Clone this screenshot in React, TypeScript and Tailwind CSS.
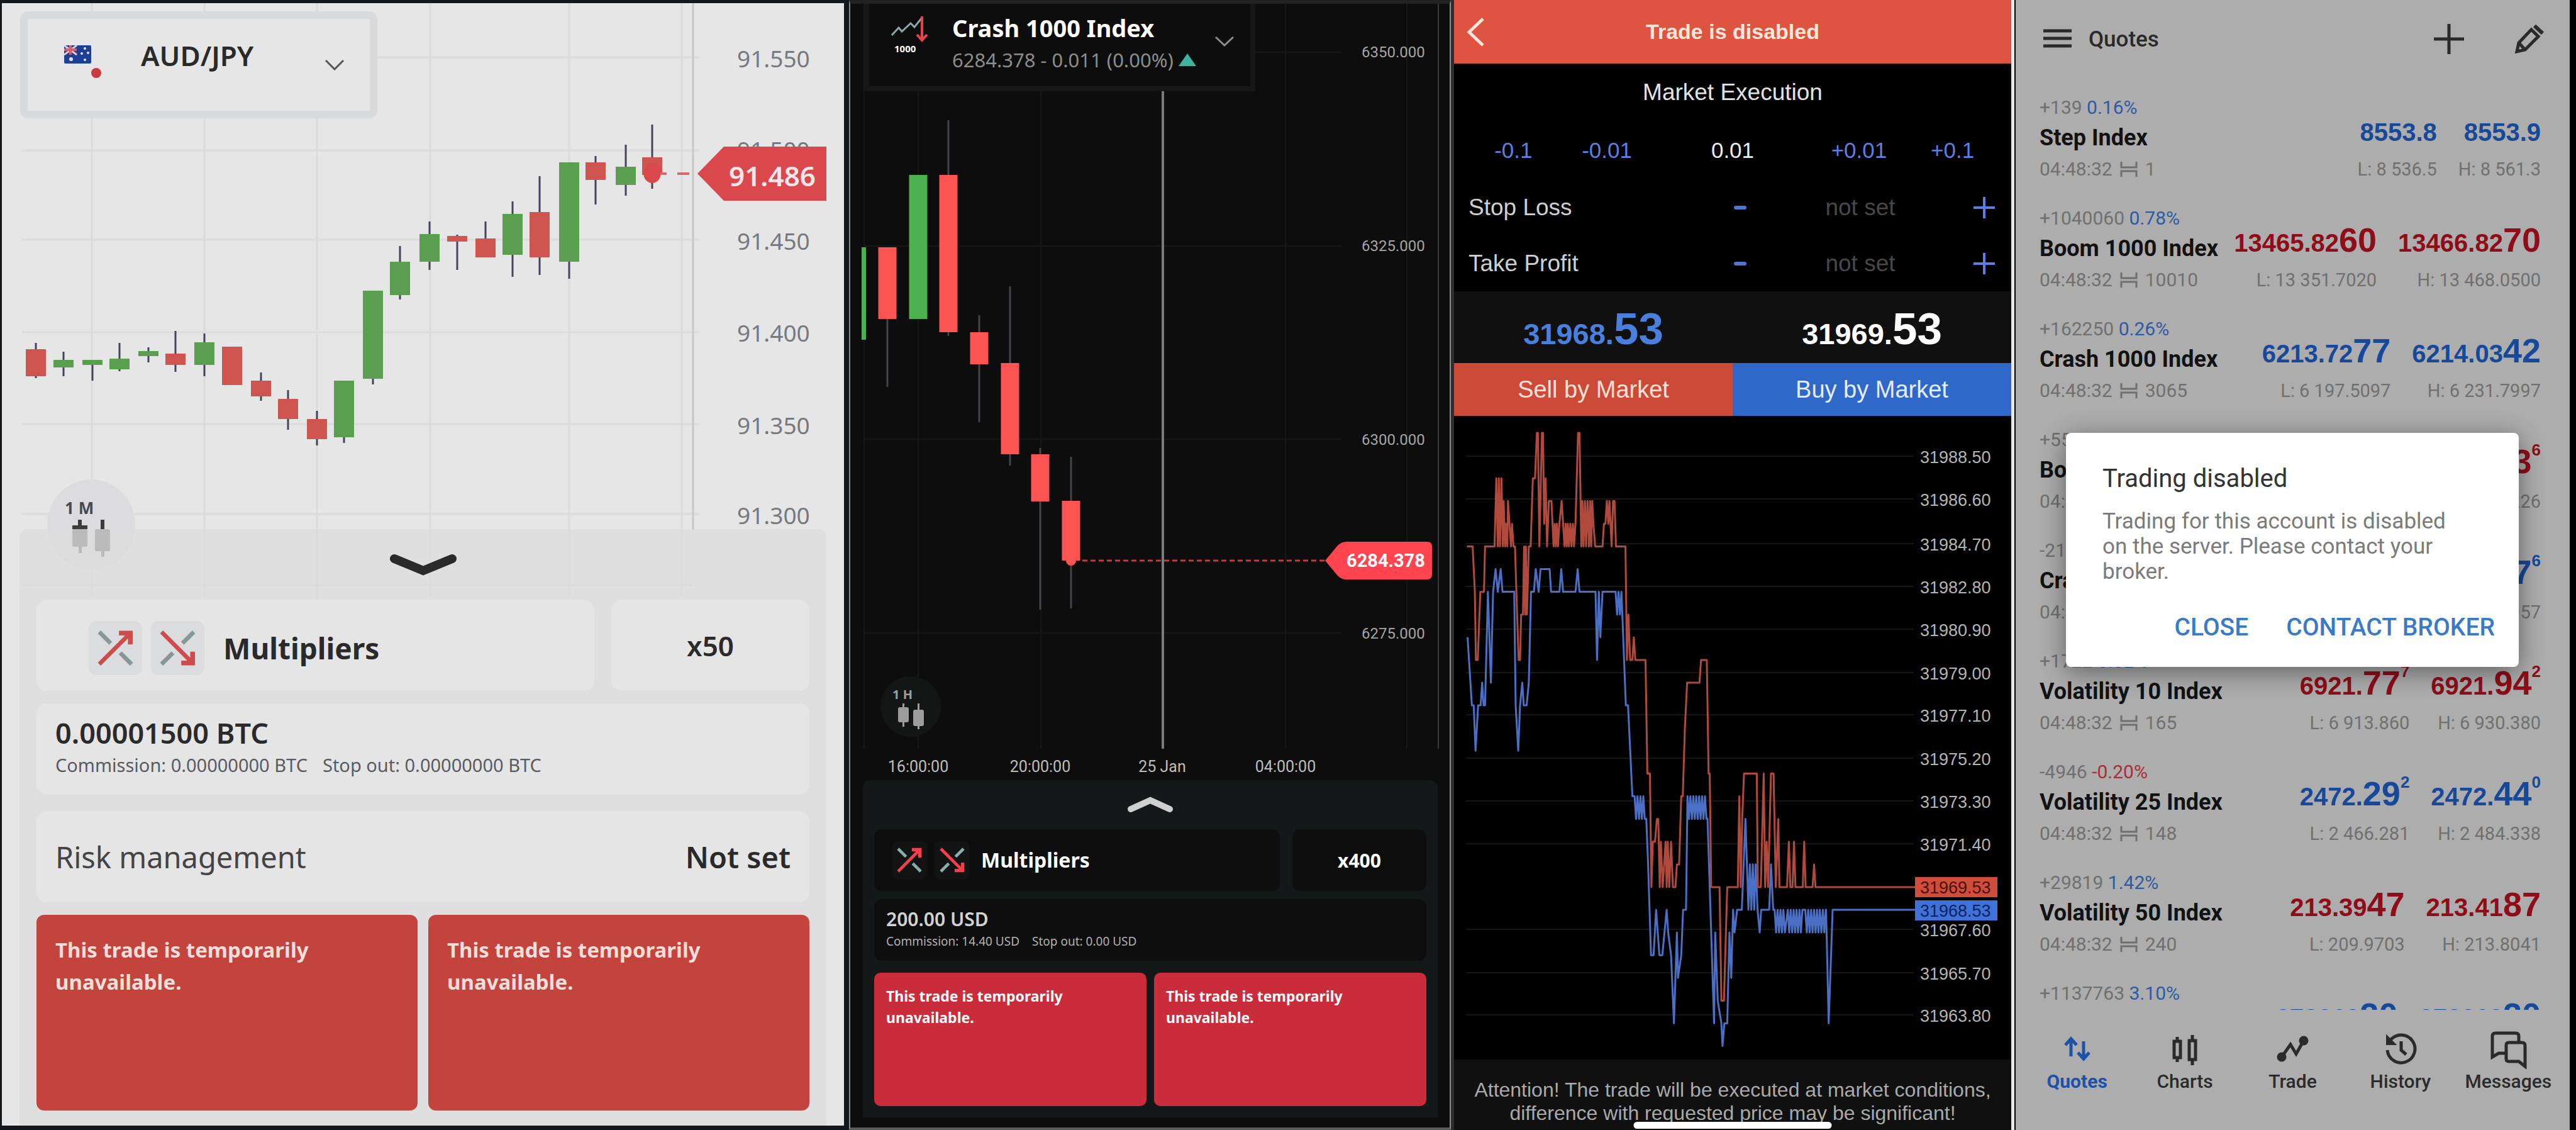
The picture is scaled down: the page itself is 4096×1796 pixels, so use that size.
import React from 'react';

type Candle = {
  x: number;
  body: [number, number];
  wick: [number, number];
  up?: boolean;
};

const audCandles: Candle[] = [
  { x: 57, body: [555, 598], wick: [545, 601] },
  { x: 101, body: [572, 584], wick: [559, 598], up: true },
  { x: 147, body: [572, 580], wick: [572, 605], up: true },
  { x: 190, body: [570, 587], wick: [545, 590], up: true },
  { x: 236, body: [558, 566], wick: [552, 576], up: true },
  { x: 279, body: [562, 580], wick: [526, 591] },
  { x: 325, body: [544, 580], wick: [530, 598], up: true },
  { x: 369, body: [551, 612], wick: [551, 612] },
  { x: 415, body: [605, 630], wick: [592, 637] },
  { x: 458, body: [634, 666], wick: [620, 683] },
  { x: 504, body: [666, 698], wick: [653, 708] },
  { x: 547, body: [605, 695], wick: [605, 704], up: true },
  { x: 593, body: [462, 602], wick: [462, 611], up: true },
  { x: 636, body: [416, 469], wick: [391, 476], up: true },
  { x: 683, body: [372, 416], wick: [352, 429], up: true },
  { x: 727, body: [375, 384], wick: [373, 429] },
  { x: 772, body: [379, 409], wick: [352, 409] },
  { x: 815, body: [340, 405], wick: [320, 440], up: true },
  { x: 858, body: [337, 409], wick: [280, 437] },
  { x: 905, body: [258, 416], wick: [258, 443], up: true },
  { x: 947, body: [258, 286], wick: [248, 325] },
  { x: 995, body: [265, 294], wick: [230, 311], up: true },
  { x: 1037, body: [250, 278], wick: [198, 300] }
];

const crashCandles: Candle[] = [
  { x: 68, body: [393, 507], wick: [393, 615] },
  { x: 117, body: [278, 507], wick: [278, 507], up: true },
  { x: 165, body: [278, 528], wick: [191, 534] },
  { x: 214, body: [528, 579], wick: [501, 671] },
  { x: 263, body: [577, 722], wick: [455, 740] },
  { x: 311, body: [722, 797], wick: [712, 969] },
  { x: 360, body: [796, 891], wick: [726, 967] }
];

// [시간, 31969.53 기준 가격 차이]
const askTicks = [
  [52, 15], [68, 15], [74, 13], [77, 10], [82, 10], [89, 13], [99, 13], [102, 15], [128, 15], [133, 18],
  [137, 15], [140, 18], [143, 15], [147, 18], [151, 15], [153, 17], [157, 15], [160, 16], [163, 15], [165, 17],
  [169, 16], [173, 15], [176, 16], [180, 15], [184, 15], [190, 12], [194, 10], [198, 10], [201, 12], [206, 12],
  [209, 15], [212, 12], [214, 15], [217, 12], [222, 15], [227, 15], [233, 18], [239, 18], [244, 20], [247, 20],
  [251, 15], [258, 20], [261, 20], [264, 16], [268, 18], [272, 15], [277, 17], [284, 17], [290, 15], [293, 16],
  [296, 15], [299, 16], [302, 15], [306, 16], [312, 17], [316, 16], [320, 15], [323, 16], [326, 15], [329, 16],
  [332, 15], [336, 16], [339, 15], [343, 16], [346, 15], [350, 16], [357, 20], [361, 20], [366, 15], [369, 17],
  [372, 15], [376, 17], [379, 15], [383, 17], [387, 15], [390, 17], [393, 15], [396, 17], [399, 16], [404, 15],
  [424, 15], [428, 16], [432, 16], [436, 17], [440, 16], [443, 17], [449, 15], [453, 17], [457, 17], [461, 15],
  [487, 15], [491, 10], [495, 12], [500, 10], [506, 10], [510, 11], [514, 10], [542, 10], [547, 5], [554, 5],
  [558, 0], [562, 2], [568, 2], [573, 3], [577, 3], [581, 0], [584, 2], [589, 0], [597, 2], [600, 0],
  [603, 2], [607, 0], [612, 2], [617, 0], [624, 0], [628, 1], [634, 1], [640, 4], [644, 4], [650, 7],
  [656, 9], [690, 9], [694, 10], [710, 10], [715, 5], [718, 5], [722, 0], [745, 0], [750, -5], [757, -5],
  [766, 0], [795, 0], [799, 4], [803, 0], [807, 3], [812, 5], [847, 5], [850, 0], [858, 0], [866, 5],
  [870, 0], [874, 2], [878, 0], [886, 5], [893, 5], [899, 0], [906, 3], [909, 0], [930, 0], [935, 2],
  [939, 0], [945, 0], [949, 2], [953, 0], [973, 0], [977, 2], [981, 0], [1000, 0], [1004, 1], [1008, 0],
  [1281, 0]
];

// 구간 [from, to]에서 두 값 사이를 오가는 틱
const flicker = (from: number, to: number, hi: number, lo: number) => {
  const ticks: number[][] = [];
  for (let t = from, i = 0; t <= to; t += 4, i++) ticks.push([t, i % 2 ? lo : hi]);
  return ticks;
};

const bidTicks = [
  [54, 12], [66, 9], [71, 9], [76, 7], [83, 9], [90, 9], [94, 10], [98, 9], [102, 9], [110, 14],
  [114, 12], [118, 10], [124, 14], [131, 15], [137, 14], [145, 15], [150, 14], [182, 14], [186, 9], [193, 7],
  [198, 9], [204, 10], [208, 9], [216, 9], [222, 10], [228, 14], [236, 14], [241, 15], [249, 14], [254, 15],
  [279, 15], [283, 14], [306, 14], [311, 15], [316, 14], [350, 14], [356, 15], [361, 14], [405, 14], [409, 11],
  [414, 14], [418, 12], [424, 14], [458, 14], ...flicker(460, 476, 14, 13), [488, 9], [494, 9], [506, 5],
  ...flicker(512, 542, 5, 4), [544, 4], [549, 2], [557, -2], [564, -2], [571, 0], [580, -2], [588, -2],
  [600, 0], [604, -1], [612, -2], [620, -5], [628, -1], [631, -3], [640, -2], [645, 0], [653, 0],
  ...flicker(657, 712, 5, 4), [712, 4], [722, -1], [730, -5], [733, -1], [740, -4], [750, -5], [753, -6],
  [758, -5], [766, -5], [772, -1], [777, -3], [782, 0], [786, -1], [793, 0], [806, 0], [816, 4],
  [824, 0], [828, 2], [832, 0], [836, 2], [840, 0], [844, 2], [849, 0], [855, -1], [859, 0], [881, 0],
  [886, 2], [892, 0], ...flicker(896, 926, 0, -1), ...flicker(932, 972, 0, -1), ...flicker(980, 1037, 0, -1),
  [1037, 0], [1044, -5], [1055, 0], [1281, 0]
];

const toPoints = (ticks: number[][], zeroY: number) =>
  ticks
    .map(([t, v]) => `${Math.round((t - 17) * 5.8) / 10},${Math.round((zeroY - v * 36.1) * 10) / 10}`)
    .join(' ');

const tickLabels: [string, number][] = [
  ['31988.50', 727], ['31986.60', 795], ['31984.70', 866], ['31982.80', 934], ['31980.90', 1002],
  ['31979.00', 1071], ['31977.10', 1138], ['31975.20', 1207], ['31973.30', 1275], ['31971.40', 1343],
  ['31967.60', 1479], ['31965.70', 1548], ['31963.80', 1615]
];

type Price = { main: string; big?: string; sup?: string };

type Quote = {
  change: string;
  percent: string;
  name: string;
  spread: string;
  bid: Price;
  ask: Price;
  low: string;
  high: string;
  down?: boolean;
  negative?: boolean;
};

const quotes: Quote[] = [
  { change: '+139', percent: '0.16%', name: 'Step Index', spread: '1', bid: { main: '8553.8' }, ask: { main: '8553.9' }, low: '8 536.5', high: '8 561.3' },
  { change: '+1040060', percent: '0.78%', name: 'Boom 1000 Index', spread: '10010', bid: { main: '13465.82', big: '60' }, ask: { main: '13466.82', big: '70' }, low: '13 351.7020', high: '13 468.0500', down: true },
  { change: '+162250', percent: '0.26%', name: 'Crash 1000 Index', spread: '3065', bid: { main: '6213.72', big: '77' }, ask: { main: '6214.03', big: '42' }, low: '6 197.5097', high: '6 231.7997' },
  { change: '+5520', percent: '0.12%', name: 'Boom 500 Index', spread: '510', bid: { main: '4921.', big: '32', sup: '6' }, ask: { main: '4921.', big: '83', sup: '6' }, low: '4 903.114', high: '4 930.226', down: true },
  { change: '-2140', percent: '-0.04%', name: 'Crash 500 Index', spread: '480', bid: { main: '5117.', big: '19', sup: '6' }, ask: { main: '5117.', big: '67', sup: '6' }, low: '5 098.310', high: '5 130.957', negative: true },
  { change: '+1722', percent: '0.02%', name: 'Volatility 10 Index', spread: '165', bid: { main: '6921.', big: '77', sup: '7' }, ask: { main: '6921.', big: '94', sup: '2' }, low: '6 913.860', high: '6 930.380', down: true },
  { change: '-4946', percent: '-0.20%', name: 'Volatility 25 Index', spread: '148', bid: { main: '2472.', big: '29', sup: '2' }, ask: { main: '2472.', big: '44', sup: '0' }, low: '2 466.281', high: '2 484.338', negative: true },
  { change: '+29819', percent: '1.42%', name: 'Volatility 50 Index', spread: '240', bid: { main: '213.39', big: '47' }, ask: { main: '213.41', big: '87' }, low: '209.9703', high: '213.8041', down: true },
  { change: '+1137763', percent: '3.10%', name: 'Volatility 75 Index', spread: '3100', bid: { main: '378263', big: '20' }, ask: { main: '378263', big: '20' }, low: '366 840.10', high: '379 120.44' }
];

function Candles({ data, width, up, down, wick }: { data: Candle[]; width: number; up: string; down: string; wick: string }) {
  return (
    <>
      {data.map((c) => (
        <g key={c.x}>
          <line x1={c.x} x2={c.x} y1={c.wick[0]} y2={c.wick[1]} stroke={wick} strokeWidth="3" />
          <rect x={c.x - width / 2} y={c.body[0]} width={width} height={c.body[1] - c.body[0]} fill={c.up ? up : down} />
        </g>
      ))}
    </>
  );
}

function MultiplierIcon({ down = false, muted, accent }: { down?: boolean; muted: string; accent: string }) {
  return (
    <svg viewBox="0 0 60 60" className="h-full w-full" fill="none" strokeWidth="7">
      <g transform={down ? 'translate(0 60) scale(1 -1)' : undefined}>
        <path d="M3 3 L22 22 M38 38 L57 57" stroke={muted} />
        <path d="M3 57 L54 6" stroke={accent} />
        <path d="M36 5 H55 V24" stroke={accent} strokeWidth="8" />
      </g>
    </svg>
  );
}

function AudJpyPanel() {
  return (
    <section className="relative flex min-w-0 flex-col border-t-[5px] border-r-8 border-b-[7px] border-l-[3px] border-[#15181a] bg-[#e6e6e6] font-['Noto_Sans',sans-serif] text-[#2a2a2b]">
      <svg viewBox="3 5 1339 945" className="block h-auto w-full">
        <g stroke="#dbdbdc" strokeWidth="3">
          {[146, 325, 504, 684, 905, 1084].map((x) => (
            <line key={x} x1={x} x2={x} y1="5" y2="950" />
          ))}
          {[91, 239, 381, 528, 674, 817].map((y) => (
            <line key={y} x1="34" x2="1112" y1={y} y2={y} />
          ))}
          <line x1="34" x2="1102" y1="930" y2="930" />
          <line x1="1102" x2="1102" y1="5" y2="842" stroke="#c6c7ca" />
        </g>
        <g fontSize="37" fill="#77797f">
          <text x="1172" y="107">91.550</text>
          <text x="1172" y="252">91.500</text>
          <text x="1172" y="397">91.450</text>
          <text x="1172" y="543">91.400</text>
          <text x="1172" y="690">91.350</text>
          <text x="1172" y="833">91.300</text>
        </g>
        <Candles data={audCandles} width={32} up="#5a9e50" down="#cf5550" wick="#45455a" />
        <ellipse cx="1037" cy="275" rx="14" ry="16" fill="#d8484c" />
        <path d="M1050 276 H1060 M1077 276 H1096" stroke="#d8686a" strokeWidth="4" />
        <path d="M1109 276 L1151 233 H1314 V319 H1151 Z" fill="#d8484c" />
        <text x="1159" y="296" fontSize="44" fontWeight="600" fill="#f3e6e6">91.486</text>
        <ellipse cx="145" cy="834" rx="70" ry="72" fill="#dcdcde" />
        <text x="103" y="817" fontSize="26" fontWeight="700" fill="#4a4a4a">1 M</text>
        <path d="M127 826 V836 M163 826 V842 M115 838 H139" stroke="#3c3c3c" strokeWidth="6" />
        <g fill="#6b6b6b">
          <rect x="115" y="841" width="24" height="28" rx="3" />
          <rect x="125" y="869" width="5" height="10" />
          <rect x="151" y="841" width="24" height="35" rx="3" />
          <rect x="161" y="876" width="5" height="9" />
        </g>
      </svg>

      <button className="absolute top-[13px] left-[29px] flex h-[170px] w-[568px] items-start rounded-xl border-[12px] border-[#d9dadc] bg-[#e6e6e6] pt-[30px] pr-10 pl-[58px] text-left">
        <svg viewBox="0 0 60 54" className="mt-3 h-[54px] w-[60px]">
          <rect width="43" height="29" fill="#1d3f94" rx="2" />
          <path d="M0 0 L20 15 M20 0 L0 15" stroke="#e8c9cf" strokeWidth="3" />
          <path d="M10 0 V15 M0 7 H20" stroke="#d5606c" strokeWidth="4" />
          <g fill="#e6e6f0">
            <circle cx="11" cy="22" r="3" />
            <circle cx="33" cy="5" r="2" />
            <circle cx="28" cy="13" r="2" />
            <circle cx="38" cy="12" r="2" />
            <circle cx="33" cy="23" r="2" />
          </g>
          <circle cx="51" cy="44" r="8" fill="#c93a42" />
        </svg>
        <span className="ml-[62px] text-[44px] leading-[56px] font-semibold">AUD/JPY</span>
        <svg viewBox="0 0 32 18" className="mt-[34px] ml-auto h-[18px] w-8" fill="none" stroke="#55565a" strokeWidth="3">
          <path d="M2 2 L16 16 L30 2" />
        </svg>
      </button>

      <div className="relative mx-7 -mt-[109px] flex flex-1 flex-col rounded-t-xl bg-[#dbdbdd]/70 px-[27px] pt-[38px] pb-6">
        <button aria-label="Collapse" className="mx-auto mb-[37px] block">
          <svg viewBox="0 0 108 38" className="h-[38px] w-[108px]" fill="none" stroke="#2a2a2b" strokeWidth="14" strokeLinecap="round">
            <path d="M8 9 L54 28 L100 9" />
          </svg>
        </button>
        <div className="flex h-36 gap-[27px]">
          <button className="flex flex-1 items-center gap-[14px] rounded-2xl bg-[#e5e5e5] pt-2 pl-[83px]">
            <span className="h-[86px] w-[85px] rounded-xl bg-[#dadcdd] p-[14px]"><MultiplierIcon muted="#84989a" accent="#ce4c4b" /></span>
            <span className="h-[86px] w-[85px] rounded-xl bg-[#dadcdd] p-[14px]"><MultiplierIcon down muted="#84989a" accent="#ce4c4b" /></span>
            <span className="ml-4 text-[46px] leading-[60px] font-bold">Multipliers</span>
          </button>
          <button className="w-[315px] rounded-2xl bg-[#e5e5e5] text-[44px] font-semibold">x50</button>
        </div>
        <div className="mt-5 h-36 rounded-2xl bg-[#e5e5e5] px-[30px] pt-[18px]">
          <p className="text-[45px] leading-[58px] font-semibold">0.00001500 BTC</p>
          <p className="mt-1 flex gap-6 text-[29px] leading-9 text-[#5a5b5e]">
            <span>Commission: 0.00000000 BTC</span>
            <span>Stop out: 0.00000000 BTC</span>
          </p>
        </div>
        <button className="mt-7 flex h-36 items-center justify-between rounded-2xl bg-[#e5e5e5] px-[30px] text-[47px]">
          <span className="text-[#444446]">Risk management</span>
          <span className="font-semibold">Not set</span>
        </button>
        <div className="mt-5 flex flex-1 gap-[17px] text-[33px] leading-[51px] font-bold text-[#f1dedb]">
          <button className="flex flex-1 items-start rounded-xl bg-[#c3443d] px-[30px] pt-[30px] text-left"><span className="max-w-[460px]">This trade is temporarily unavailable.</span></button>
          <button className="flex flex-1 items-start rounded-xl bg-[#c3443d] px-[30px] pt-[30px] text-left"><span className="max-w-[460px]">This trade is temporarily unavailable.</span></button>
        </div>
      </div>
    </section>
  );
}

function CrashPanel() {
  return (
    <section className="relative flex min-w-0 flex-col border-x-2 border-t-[6px] border-b-4 border-x-[#8b8b8b] border-t-[#222222] border-b-[#5a5a5a] bg-[#0d0d0d] font-['Noto_Sans',sans-serif]">
      <svg viewBox="9 6 953 1234" className="block h-auto w-full">
        <g stroke="#171818" strokeWidth="2">
          {[31, 117, 312, 701, 894].map((x) => (
            <line key={x} x1={x} x2={x} y1="6" y2="1190" />
          ))}
          {[83, 391, 698, 1006].map((y) => (
            <line key={y} x1="31" x2="790" y1={y} y2={y} />
          ))}
          <line x1="944" x2="944" y1="6" y2="1190" stroke="#3a3a3a" />
        </g>
        <line x1="506" x2="506" y1="140" y2="1190" stroke="#7a7a7a" strokeWidth="4" />
        <g fontSize="24" fill="#a4a4a4" className="font-[Roboto,sans-serif]">
          <text x="822" y="91">6350.000</text>
          <text x="822" y="399">6325.000</text>
          <text x="822" y="707">6300.000</text>
          <text x="822" y="1015">6275.000</text>
        </g>
        <g fontSize="25" fill="#bcbcbc" textAnchor="middle" className="font-[Roboto,sans-serif]">
          <text x="117" y="1227">16:00:00</text>
          <text x="311" y="1227">20:00:00</text>
          <text x="505" y="1227">25 Jan</text>
          <text x="701" y="1227">04:00:00</text>
        </g>
        <rect x="27" y="393" width="7" height="147" fill="#4caf50" />
        <Candles data={crashCandles} width={29} up="#4caf50" down="#fb5452" wick="#43434a" />
        <circle cx="360" cy="891" r="8" fill="#fb5452" />
        <line x1="378" x2="764" y1="891" y2="891" stroke="#c23a42" strokeWidth="3" strokeDasharray="8 5" />
        <path d="M764 891 L784 867 Q790 861 798 861 H926 Q934 861 934 869 V913 Q934 921 926 921 H798 Q790 921 784 915 Z" fill="#ff444f" />
        <text x="798" y="901" fontSize="29" fontWeight="700" fill="#ffffff" className="font-[Roboto,sans-serif]">6284.378</text>
        <circle cx="105" cy="1123" r="48" fill="#141616" />
        <text x="76" y="1111" fontSize="20" fontWeight="700" fill="#9d9d9d">1 H</text>
        <g fill="#9d9d9d">
          <rect x="85" y="1124" width="17" height="24" rx="3" />
          <rect x="92" y="1118" width="3" height="37" />
          <rect x="109" y="1128" width="17" height="26" rx="3" />
          <rect x="116" y="1118" width="3" height="41" />
        </g>
      </svg>

      <button className="absolute top-0 left-[22px] flex h-[139px] w-[622px] items-start border-8 border-t-0 border-[#161717] bg-[#0d0d0d] pt-[15px] pr-[26px] pl-[34px] text-left">
        <svg viewBox="0 0 60 66" className="mt-1 h-[66px] w-[60px]" fill="none" strokeWidth="3">
          <path d="M2 31 L13 19 L18 25 L32 12 L38 18 L50 3" stroke="#87a9a8" />
          <path d="M50 1 V38 M42 30 L50 39 L58 30" stroke="#e5424d" strokeWidth="4" />
          <text x="6" y="58" fontSize="15" fontWeight="700" fill="#ffffff" stroke="none">1000</text>
        </svg>
        <span className="ml-[38px] flex-1">
          <span className="block text-[38px] leading-[46px] font-bold text-white">Crash 1000 Index</span>
          <span className="flex items-center gap-2 text-[31px] leading-[56px] text-[#8c8c8c]">
            6284.378 - 0.011 (0.00%)
            <svg viewBox="0 0 28 20" className="h-5 w-7"><path d="M14 0 L28 20 H0 Z" fill="#3fb39b" /></svg>
          </span>
        </span>
        <svg viewBox="0 0 30 16" className="mt-[37px] h-4 w-[30px]" fill="none" stroke="#8b8b8b" strokeWidth="3">
          <path d="M1 1 L15 14 L29 1" />
        </svg>
      </button>

      <div className="mr-[19px] mb-4 ml-5 flex flex-1 flex-col rounded-t-xl bg-[#151818] px-[18px] pt-6 pb-[18px] text-white">
        <button aria-label="Expand" className="mx-auto mb-[24px] block">
          <svg viewBox="0 0 74 30" className="h-[30px] w-[74px]" fill="none" stroke="#cfcfcf" strokeWidth="10" strokeLinecap="round">
            <path d="M6 22 L37 8 L68 22" />
          </svg>
        </button>
        <div className="flex h-[98px] gap-5">
          <button className="flex flex-1 items-center rounded-xl bg-[#0e0e0e] pl-[28px]">
            <span className="h-[60px] w-[56px] rounded-lg bg-[#121414] p-2"><MultiplierIcon muted="#86b0ab" accent="#f3414c" /></span>
            <span className="ml-3 h-[60px] w-[56px] rounded-lg bg-[#121414] p-2"><MultiplierIcon down muted="#86b0ab" accent="#f3414c" /></span>
            <span className="ml-[18px] text-[32px] leading-10 font-bold">Multipliers</span>
          </button>
          <button className="w-[213px] rounded-xl bg-[#0e0e0e] text-[30px] font-bold">x400</button>
        </div>
        <div className="mt-[13px] h-[98px] rounded-xl bg-[#0e0e0e] px-[19px] pt-[12px]">
          <p className="text-[30px] leading-[40px] font-semibold text-[#d2d2d2]">200.00 USD</p>
          <p className="flex gap-5 text-[19px] leading-[30px] text-[#b0b0b0]">
            <span>Commission: 14.40 USD</span>
            <span>Stop out: 0.00 USD</span>
          </p>
        </div>
        <div className="mt-[19px] flex flex-1 gap-3 text-[23px] leading-[34px] font-bold text-white">
          <button className="flex flex-1 items-start rounded-[10px] bg-[#c92d3c] px-[19px] pt-5 text-left"><span className="max-w-[320px]">This trade is temporarily unavailable.</span></button>
          <button className="flex flex-1 items-start rounded-[10px] bg-[#c92d3c] px-[19px] pt-5 text-left"><span className="max-w-[320px]">This trade is temporarily unavailable.</span></button>
        </div>
      </div>
    </section>
  );
}

function LevelRow({ id, label }: { id: string; label: string }) {
  return (
    <div className="flex h-[89px] items-center pr-[26px] pl-[23px]">
      <label htmlFor={id} className="flex-1 text-[37px] text-[#cfcfcf]">{label}</label>
      <button aria-label={`Decrease ${label}`} className="flex h-9 w-[34px] items-center">
        <span className="h-[6px] w-5 rounded-sm bg-[#4f74d2]" />
      </button>
      <input id={id} placeholder="not set" className="mr-[80px] ml-[67px] w-[200px] bg-transparent text-center text-[37px] text-white placeholder:text-[#484848]" />
      <button aria-label={`Increase ${label}`}>
        <svg viewBox="0 0 34 34" className="h-[34px] w-[34px]" stroke="#5a80e6" strokeWidth="4"><path d="M17 0 V34 M0 17 H34" /></svg>
      </button>
    </div>
  );
}

function ExecutionPanel() {
  return (
    <section className="relative flex min-w-0 flex-col border-r-[5px] border-l-[5px] border-l-[#2c2c2c] border-r-[#e8e8e8] bg-black font-['Liberation_Sans',Arial,sans-serif]">
      <header className="relative flex h-[101px] items-center justify-center bg-[#df5341]">
        <button aria-label="Back" className="absolute top-7 left-[18px]">
          <svg viewBox="0 0 32 46" className="h-[46px] w-8" fill="none" stroke="#fbe6dc" strokeWidth="5"><path d="M28 2 L6 23 L28 44" /></svg>
        </button>
        <h1 className="text-[34px] font-bold text-[#fde6da]">Trade is disabled</h1>
      </header>
      <p className="flex h-[92px] items-center justify-center text-[37px] text-[#e2e2e2]">Market Execution</p>
      <div className="grid h-[92px] grid-cols-[148fr_148fr_250fr_150fr_146fr] items-center px-5 text-[35px] text-[#5a80e0]">
        <button>-0.1</button>
        <button>-0.01</button>
        <input aria-label="Volume" defaultValue="0.01" className="min-w-0 bg-transparent text-center text-[#ececec]" />
        <button>+0.01</button>
        <button>+0.1</button>
      </div>
      <LevelRow id="stop-loss" label="Stop Loss" />
      <LevelRow id="take-profit" label="Take Profit" />
      <div className="grid h-[114px] grid-cols-2 bg-[#101010] pt-[6px] text-center text-[47px] leading-[108px] font-bold">
        <p className="text-[#4a80dc]">31968.<span className="text-[71px]">53</span></p>
        <p className="text-white">31969.<span className="text-[71px]">53</span></p>
      </div>
      <div className="grid h-[84px] grid-cols-2 text-[38px]">
        <button className="bg-[#cb4a38] text-[#fbe1d8]">Sell by Market</button>
        <button className="bg-[#2f68c9] text-[#e3edff]">Buy by Market</button>
      </div>
      <svg viewBox="0 661 886 1023" className="block h-auto w-full">
        <g stroke="#171717" strokeWidth="2">
          {tickLabels.map(([label, y]) => (
            <line key={label} x1="19" x2="731" y1={y - 2} y2={y - 2} />
          ))}
        </g>
        <g fontSize="27" fill="#b4b4b4">
          {tickLabels.map(([label, y]) => (
            <text key={label} x="741" y={y + 9}>{label}</text>
          ))}
        </g>
        <polyline points={toPoints(bidTicks, 1446)} fill="none" stroke="#4a6fc4" strokeWidth="3" strokeLinejoin="round" />
        <polyline points={toPoints(askTicks, 1410)} fill="none" stroke="#b04a3c" strokeWidth="3" strokeLinejoin="round" />
        <rect x="733" y="1394" width="131" height="32" fill="#cf4d3a" />
        <rect x="733" y="1431" width="131" height="32" fill="#3f72d8" />
        <text x="741" y="1420" fontSize="27" fill="#4a120b">31969.53</text>
        <text x="741" y="1457" fontSize="27" fill="#0c2260">31968.53</text>
      </svg>
      <footer className="relative flex-1 bg-[#101010] pt-[30px] text-center text-[32px] leading-[37px] text-[#a9a9a9]">
        <p>Attention! The trade will be executed at market conditions,<br />difference with requested price may be significant!</p>
        <span className="absolute bottom-[2px] left-1/2 h-[11px] w-[315px] -translate-x-1/2 rounded-full bg-white" />
      </footer>
    </section>
  );
}

function PriceColumn({ price, label }: { price: Price; label: string }) {
  return (
    <div className="flex flex-col items-end whitespace-nowrap">
      <p className="mt-[22px] mb-[10px] h-16 font-['Liberation_Sans',sans-serif] text-[54px] leading-[64px] font-bold">
        <span className="text-[40px] leading-none">{price.main}</span>
        {price.big}
        {price.sup && <span className="align-[28px] text-[26px] leading-none">{price.sup}</span>}
      </p>
      <p className="text-[29px] leading-[44px] text-[#707070]">{label}</p>
    </div>
  );
}

function QuoteRow({ quote }: { quote: Quote }) {
  return (
    <li className="flex h-44 justify-between py-[18px] pr-[46px] pl-[38px]">
      <div className="whitespace-nowrap">
        <p className="text-[30px] leading-10 text-[#707070]">
          {quote.change} <span className={quote.negative ? 'text-[#a82f3a]' : 'text-[#2f5aa6]'}>{quote.percent}</span>
        </p>
        <p className="text-[36px] leading-[56px] font-bold text-[#121212]">{quote.name}</p>
        <p className="flex items-center gap-3 text-[30px] leading-[44px] text-[#707070]">
          04:48:32
          <svg viewBox="0 0 28 24" className="h-6 w-7" fill="none" stroke="#707070" strokeWidth="3"><path d="M2 0 V9 H26 V0 M2 24 V15 H26 V24" /></svg>
          {quote.spread}
        </p>
      </div>
      <div className={quote.down ? 'flex gap-[34px] text-[#8e0d19]' : 'flex gap-[34px] text-[#17499a]'}>
        <PriceColumn price={quote.bid} label={`L: ${quote.low}`} />
        <PriceColumn price={quote.ask} label={`H: ${quote.high}`} />
      </div>
    </li>
  );
}

function NavItem({ label, active = false, children }: { label: string; active?: boolean; children: React.ReactNode }) {
  return (
    <a
      href={`#${label.toLowerCase()}`}
      className={active ? 'flex flex-1 flex-col items-center font-bold text-[#1d52ab]' : 'flex flex-1 flex-col items-center font-medium text-[#2b2b2b]'}>
      <svg viewBox="0 0 60 60" className="h-[60px] w-[60px]" fill="none" stroke="currentColor" strokeWidth="5">{children}</svg>
      <span className="text-[30px] leading-10">{label}</span>
    </a>
  );
}

function QuotesPanel() {
  return (
    <section className="relative flex h-screen min-w-0 flex-col border-r-[10px] border-l-2 border-black bg-[#adadad] font-[Roboto,sans-serif]">
      <header className="flex h-[133px] shrink-0 items-start pt-[34px] pr-10 pl-11 text-[#2a2a2a]">
        <button aria-label="Menu" className="mt-3">
          <svg viewBox="0 0 45 30" className="h-[30px] w-[45px]" stroke="currentColor" strokeWidth="5"><path d="M0 3 H45 M0 15 H45 M0 27 H45" /></svg>
        </button>
        <h2 className="ml-[27px] flex-1 text-[35px] leading-[58px] font-medium">Quotes</h2>
        <button aria-label="Add symbol" className="mt-1">
          <svg viewBox="0 0 48 48" className="h-12 w-12" stroke="currentColor" strokeWidth="5"><path d="M24 0 V48 M0 24 H48" /></svg>
        </button>
        <button aria-label="Edit" className="mt-1 ml-20">
          <svg viewBox="0 0 48 48" className="h-12 w-12" fill="none" stroke="currentColor" strokeWidth="5">
            <path d="M4 44 L7 30 L27 9 L38 20 L17 41 Z M7 30 L17 41" />
            <path d="M32 3 L45 15" strokeWidth="6" />
          </svg>
        </button>
      </header>

      <ul className="min-h-0 flex-1 overflow-hidden">
        {quotes.map((q) => (
          <QuoteRow key={q.name} quote={q} />
        ))}
      </ul>

      <nav className="flex h-[191px] shrink-0 px-3 pt-[34px]">
        <NavItem label="Quotes" active>
          <path d="M20 40 V13 M11 22 L20 12 L29 22" />
          <path d="M40 16 V43 M31 34 L40 44 L49 34" />
        </NavItem>
        <NavItem label="Charts">
          <path d="M18 9 V17 M18 41 V49 M13 16 H23 V42 H13 Z" />
          <path d="M42 6 V16 M42 44 V54 M37 15 H47 V45 H37 Z" />
        </NavItem>
        <NavItem label="Trade">
          <path d="M12 41 L26 21 L35 36 L47 15" />
          <circle cx="12" cy="41" r="5" fill="currentColor" />
          <circle cx="47" cy="15" r="5" fill="currentColor" />
        </NavItem>
        <NavItem label="History">
          <path d="M9 30 A22 22 0 1 0 14 14" />
          <path d="M8 7 V21 H22 Z" fill="currentColor" strokeWidth="2" />
          <path d="M31 16 V30 L39 37" />
        </NavItem>
        <NavItem label="Messages">
          <path d="M26 35 H15 L5 41 V8 Q5 3 10 3 H42 Q47 3 47 8 V16" />
          <path d="M31 18 H52 Q57 18 57 23 V56 L47 48 H31 Q27 48 27 44 V22 Q27 18 31 18 Z" />
        </NavItem>
      </nav>

      <div
        role="dialog"
        aria-labelledby="dialog-title"
        className="absolute top-[688px] right-[81px] left-[80px] rounded-lg bg-white px-[58px] pt-[47px] pb-[37px] shadow-[0_8px_40px_rgba(0,0,0,0.45)]">
        <h3 id="dialog-title" className="text-[40px] leading-[52px] text-[#333333]">Trading disabled</h3>
        <p className="mt-[22px] max-w-[580px] text-[35px] leading-10 text-[#7b7b7b]">
          Trading for this account is disabled on the server. Please contact your broker.
        </p>
        <div className="-mr-5 mt-[42px] flex justify-end gap-[60px] text-[39px] leading-[52px] font-medium text-[#3a7bc8]">
          <button>CLOSE</button>
          <button>CONTACT BROKER</button>
        </div>
      </div>
    </section>
  );
}

export default function App() {
  return (
    <main className="grid min-h-screen grid-cols-[1350fr_957fr_896fr_893fr] bg-[#0d0d0d]">
      <AudJpyPanel />
      <CrashPanel />
      <ExecutionPanel />
      <QuotesPanel />
    </main>
  );
}
